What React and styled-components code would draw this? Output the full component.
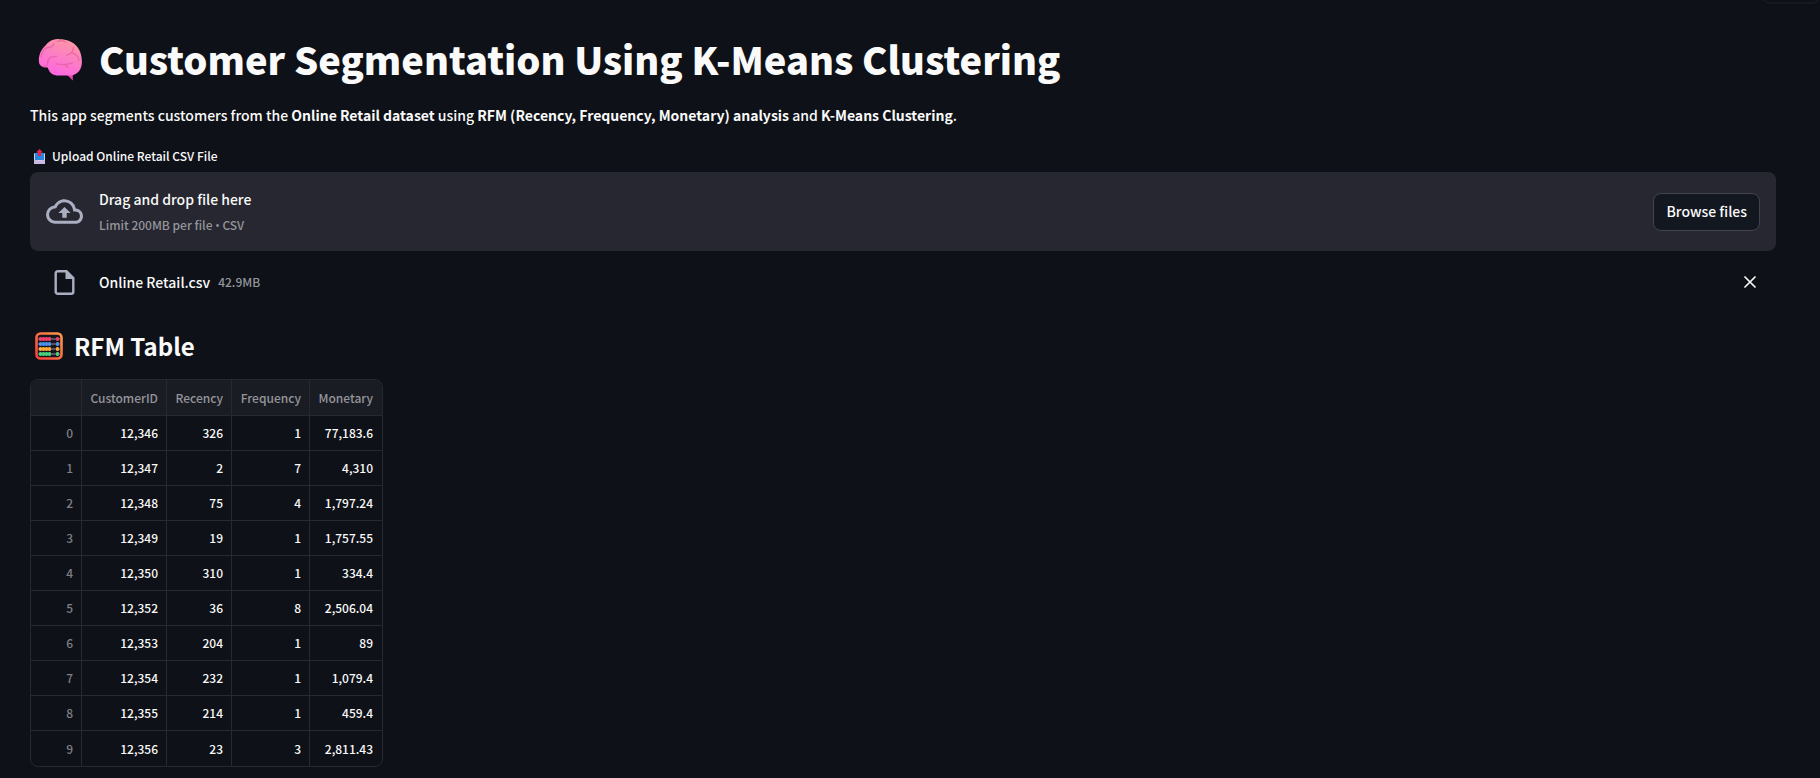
import React from "react";
import styled, { createGlobalStyle } from "styled-components";

const GlobalStyle = createGlobalStyle`
  * { box-sizing: border-box; }
  body {
    margin: 0;
    background: #0e1117;
    color: #fafafa;
    font-family: "Noto Sans CJK SC", "Noto Sans", sans-serif;
    font-size: 14px;
    line-height: 24px;
    font-weight: 500;
  }
`;

const Page = styled.main`
  position: relative;
  padding: 29px 44px 11px 30px;
  overflow: hidden;
`;

const ToolbarEdge = styled.div`
  position: absolute;
  top: -32px;
  right: 0;
  width: 58px;
  height: 36px;
  border: 2px solid #151920;
  border-radius: 8px;
`;

const Title = styled.h1`
  display: flex;
  align-items: center;
  gap: 16px;
  margin: 0;
  padding-left: 8px;
  font-size: 38px;
  line-height: 60px;
  font-weight: 900;
`;

const Intro = styled.p`
  margin: 14px 0 0;
`;

const FieldLabel = styled.label`
  display: flex;
  align-items: center;
  gap: 6px;
  margin-top: 17px;
  padding-left: 3px;
  font-size: 12px;
`;

const HiddenInput = styled.input`
  position: absolute;
  width: 1px;
  height: 1px;
  opacity: 0;
`;

const Dropzone = styled.section`
  display: flex;
  align-items: center;
  gap: 16px;
  height: 79px;
  margin-top: 4px;
  padding: 0 16px;
  border-radius: 8px;
  background: #262730;
`;

const IconSlot = styled.span`
  display: flex;
  justify-content: center;
  width: 37px;
  color: #a9aec1;
`;

const DropText = styled.div`
  flex: 1;
  display: flex;
  flex-direction: column;
  gap: 2px;
  padding-top: 2px;
`;

const Muted = styled.span`
  font-size: 12px;
  color: #94959b;
`;

const Bullet = styled.span`
  font-family: "Open Sans", sans-serif;
`;

const BrowseButton = styled.button`
  height: 38px;
  padding: 0 12px 2px;
  border: 1px solid #41444c;
  border-radius: 8px;
  background: #131720;
  color: #fafafa;
  font: inherit;
`;

const FileRow = styled.div`
  display: flex;
  align-items: center;
  gap: 16px;
  height: 32px;
  margin-top: 15px;
  padding: 0 16px;
`;

const FileName = styled.div`
  flex: 1;
  display: flex;
  align-items: center;
  gap: 8px;
`;

const CloseButton = styled.button`
  display: flex;
  padding: 4px;
  border: 0;
  background: none;
  color: #fafafa;
`;

const SectionTitle = styled.h2`
  display: flex;
  align-items: center;
  gap: 11px;
  margin: 28px 0 0;
  padding-left: 5px;
  font-size: 24px;
  line-height: 40px;
  font-weight: 700;
`;

const TableFrame = styled.div`
  width: fit-content;
  margin-top: 13px;
  border: 1px solid #262930;
  border-radius: 8px;
  overflow: hidden;
`;

const Table = styled.table`
  border-collapse: separate;
  border-spacing: 0;
  table-layout: fixed;
  width: 351px;
  font-size: 12px;
  line-height: 20px;
`;

const Cell = styled.td`
  height: 35px;
  padding: 0 8px 0 0;
  border-right: 1px solid #262930;
  border-bottom: 1px solid #262930;
  text-align: right;
  font-weight: 500;
  color: ${(p) => (p.$muted ? "#7e8086" : "#fafafa")};
  &:last-child { border-right: 0; padding-right: 9px; }
  tr:last-child > & { border-bottom: 0; }
`;

const HeadCell = styled.th`
  width: ${(p) => p.$width}px;
  height: 36px;
  padding: 0 8px 0 0;
  border-right: 1px solid #262930;
  border-bottom: 1px solid #262930;
  background: #1a1c24;
  text-align: right;
  font-weight: 500;
  color: #94959b;
  &:last-child { border-right: 0; padding-right: 9px; }
`;

const columns = [
  ["", 51],
  ["CustomerID", 85],
  ["Recency", 65],
  ["Frequency", 78],
  ["Monetary", 72],
];

const rows = [
  ["12,346", "326", "1", "77,183.6"],
  ["12,347", "2", "7", "4,310"],
  ["12,348", "75", "4", "1,797.24"],
  ["12,349", "19", "1", "1,757.55"],
  ["12,350", "310", "1", "334.4"],
  ["12,352", "36", "8", "2,506.04"],
  ["12,353", "204", "1", "89"],
  ["12,354", "232", "1", "1,079.4"],
  ["12,355", "214", "1", "459.4"],
  ["12,356", "23", "3", "2,811.43"],
];

const BrainIcon = () => (
  <svg width="45" height="43" viewBox="0 0 42 40" aria-hidden="true">
    <defs>
      <linearGradient id="brain" x1="0.8" y1="0" x2="0.4" y2="1">
        <stop offset="0" stopColor="#ff9aa0" />
        <stop offset="0.5" stopColor="#fb7fc4" />
        <stop offset="1" stopColor="#ff66e0" />
      </linearGradient>
    </defs>
    <path d="M26 33l6.500 6.500V31z" fill="#f23fb4" />
    <path d="M20 1C14 0 9 4 7 7 3 10 0 17 1 23c1 4 5 4.500 8 4.500C11 33 14 35 19 35h12c6-1 10-6 10-13C41 10 34 1 20 1z" fill="url(#brain)" />
    <g fill="none" stroke="#e0569a" strokeOpacity="0.65" strokeWidth="1.200" strokeLinecap="round">
      <path d="M15 5c-1 3-4 4-7 4-3 2-5 6-5 9M18 3c3-1 6-1 8 1M33 9c0 4-3 6-6 7M32 14c4 1 6 4 6 7M17 17c-6 0-8 3-8 6s-2 4-4 3M17 24c5 1 11 1 15-1M26 25c0 1 1 2 2 2" />
    </g>
  </svg>
);

const OutboxIcon = () => (
  <svg width="13" height="15" viewBox="0 0 13 15" aria-hidden="true">
    <rect x="1" y="4" width="11" height="11" rx="1" fill="#cfcfe6" />
    <path d="M2 4h9v7H2z" fill="#2787dc" />
    <path d="M1 11h3l1 1h3l1-1h3v4H1z" fill="#c9b8e2" />
    <path d="M6.500 0L10 3.500H8V7H5V3.500H3z" fill="#e0264f" />
  </svg>
);

const AbacusIcon = () => (
  <svg width="28" height="28" viewBox="0 0 28 28" aria-hidden="true">
    <defs>
      <linearGradient id="frame" x1="0" y1="1" x2="1" y2="0">
        <stop offset="0" stopColor="#fb3d3a" />
        <stop offset="1" stopColor="#ff9a4a" />
      </linearGradient>
    </defs>
    <rect x="1.500" y="1.500" width="25" height="25" rx="4" fill="#17151c" stroke="url(#frame)" strokeWidth="2.600" />
    {["#ee3f6c", "#4a8fe8", "#fbab38", "#46d07c"].map((color, i) => (
      <g key={color} fill={color}>
        <path d={`M3 ${7 + i * 5}h22`} stroke="#9b8fb0" />
        {[4, 7, 10, 13, 21].map((x) => (
          <rect key={x} x={x} y={5 + i * 5} width="3" height="4" rx="1.200" />
        ))}
      </g>
    ))}
  </svg>
);

const CloudIcon = () => (
  <svg width="37" height="37" viewBox="0 0 24 24" fill="currentColor" aria-hidden="true">
    <path d="M19.350 10.040A7.490 7.490 0 0 0 12 4C9.110 4 6.600 5.640 5.350 8.040A5.994 5.994 0 0 0 0 14c0 3.310 2.690 6 6 6h13c2.760 0 5-2.240 5-5 0-2.640-2.050-4.780-4.650-4.960zM19 18H6c-2.210 0-4-1.790-4-4 0-2.050 1.530-3.760 3.560-3.970l1.070-.110.500-.950A5.469 5.469 0 0 1 12 6c2.620 0 4.880 1.860 5.390 4.430l.300 1.500 1.530.110A2.980 2.980 0 0 1 22 15c0 1.650-1.350 3-3 3zM8 13h2.550v3h2.900v-3H16l-4-4z" />
  </svg>
);

const FileIcon = () => (
  <svg width="21" height="25" viewBox="0 0 20 25" aria-hidden="true">
    <path d="M3 1.200h9l6.800 6.800v13.800a2 2 0 0 1-2 2H3.200a2 2 0 0 1-2-2V3.200a2 2 0 0 1 2-2z" fill="none" stroke="currentColor" strokeWidth="2.400" />
    <path d="M11 1h1.500L19 7.500V9h-8z" fill="currentColor" />
  </svg>
);

const CloseIcon = () => (
  <svg width="12" height="12" viewBox="0 0 12 12" stroke="currentColor" strokeWidth="1.700" strokeLinecap="round" aria-hidden="true">
    <path d="M1 1l10 10M11 1L1 11" />
  </svg>
);

export default function App() {
  const picker = React.useRef(null);
  return (
    <Page>
      <GlobalStyle />
      <ToolbarEdge />
      <Title><BrainIcon />Customer Segmentation Using K-Means Clustering</Title>
      <Intro>
        This app segments customers from the <strong>Online Retail dataset</strong> using{" "}
        <strong>RFM (Recency, Frequency, Monetary) analysis</strong> and <strong>K-Means Clustering</strong>.
      </Intro>
      <FieldLabel htmlFor="csv"><OutboxIcon />Upload Online Retail CSV File</FieldLabel>
      <Dropzone>
        <IconSlot><CloudIcon /></IconSlot>
        <DropText>
          <span>Drag and drop file here</span>
          <Muted>Limit 200MB per file <Bullet>•</Bullet> CSV</Muted>
        </DropText>
        <HiddenInput ref={picker} id="csv" type="file" accept=".csv" tabIndex={-1} />
        <BrowseButton type="button" onClick={() => picker.current.click()}>Browse files</BrowseButton>
      </Dropzone>
      <FileRow>
        <IconSlot><FileIcon /></IconSlot>
        <FileName><span>Online Retail.csv</span><Muted>42.9MB</Muted></FileName>
        <CloseButton type="button" aria-label="Remove file"><CloseIcon /></CloseButton>
      </FileRow>
      <SectionTitle><AbacusIcon />RFM Table</SectionTitle>
      <TableFrame>
        <Table>
          <thead>
            <tr>{columns.map(([name, width]) => <HeadCell key={name} $width={width} scope="col">{name}</HeadCell>)}</tr>
          </thead>
          <tbody>
            {rows.map((row, i) => (
              <tr key={row[0]}>
                <Cell $muted>{i}</Cell>
                {row.map((value, j) => <Cell key={j}>{value}</Cell>)}
              </tr>
            ))}
          </tbody>
        </Table>
      </TableFrame>
    </Page>
  );
}
